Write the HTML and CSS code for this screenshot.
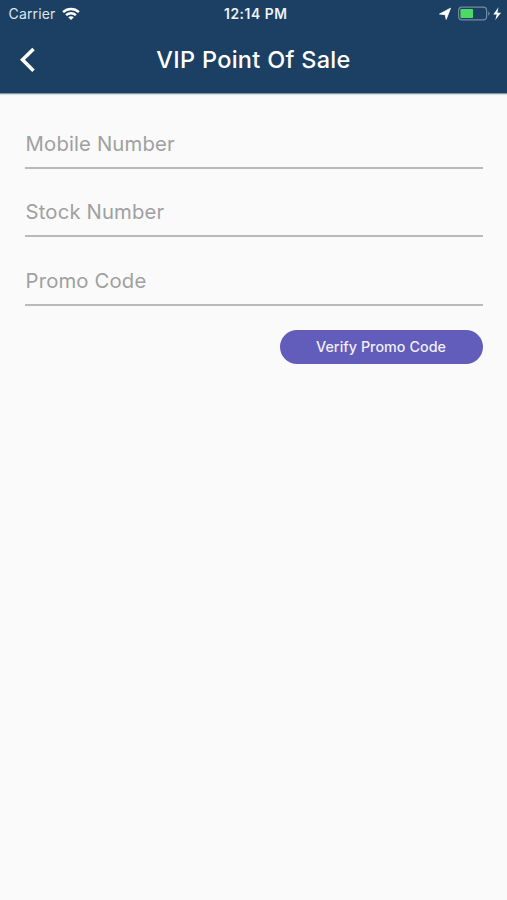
FILE: index.html
```html
<!DOCTYPE html>
<html lang="en">
<head>
<meta charset="utf-8">
<title>VIP Point Of Sale</title>
<link rel="stylesheet" href="styles.css">
</head>
<body>
<header class="header">
  <div class="status">
    <div class="status-left">
      <span class="carrier">Carrier</span>
      <svg class="wifi" width="18" height="14" viewBox="0 0 18 14" fill="none" stroke="#fff" stroke-width="2.4">
        <path d="M1.1 5.1C5.6.9 12.4.9 16.9 5.1"/>
        <path d="M4.1 8.2C6.9 5.6 11.1 5.6 13.9 8.2"/>
        <path d="M9 12.9 6.2 10.2C7.8 8.8 10.2 8.8 11.8 10.2Z" fill="#fff" stroke="none"/>
      </svg>
    </div>
    <span class="time">12:14 PM</span>
    <div class="status-right">
      <svg width="64" height="16" viewBox="0 0 64 16">
        <path d="M11.5 2.2 7.2 13.4 6.2 8.7 .5 8Z" fill="#fff" stroke="#fff" stroke-width=".8" stroke-linejoin="round"/>
        <rect x="19.6" y="1.1" width="28" height="12.8" rx="3.4" fill="none" stroke="#728ba4" stroke-width="1.2"/>
        <rect x="21.4" y="3.1" width="12.7" height="8.8" rx="1" fill="#4cd964"/>
        <path d="M49.2 5.4C51 6 51 9 49.2 9.6Z" fill="#728ba4"/>
        <path d="M59.5 1.3 54.3 8.4H57.7L56.3 14 62 6.7H58.4Z" fill="#fff"/>
      </svg>
    </div>
  </div>
  <div class="navbar">
    <button class="back" aria-label="Back">
      <svg width="18" height="26" viewBox="0 0 18 26" fill="none" stroke="#fff" stroke-width="3.5"><path d="M14.5 1.9 3.5 12.8 14.5 23.7"/></svg>
    </button>
    <h1 class="title">VIP Point Of Sale</h1>
  </div>
</header>
<main class="form">
  <label class="field"><span>Mobile Number</span></label>
  <label class="field"><span>Stock Number</span></label>
  <label class="field"><span>Promo Code</span></label>
  <button class="verify">Verify Promo Code</button>
</main>
</body>
</html>
```
FILE: styles.css
```css
* { box-sizing: border-box; }
body {
  margin: 0;
  min-height: 900px;
  background: #fafafa;
  font-family: Inter, "Liberation Sans", sans-serif;
}
button { border: 0; padding: 0; background: none; font: inherit; color: inherit; }
svg { display: block; }
.header {
  height: 94px;
  background: #1c4063;
  color: #fff;
  border-bottom: 1px solid #7f94a8;
  box-shadow: 0 1px 1px rgba(0, 0, 0, .1);
}
.status {
  display: grid;
  grid-template-columns: 1fr auto 1fr;
  align-items: center;
  height: 27px;
  padding: 0 4px 0 8.5px;
}
.status-left { display: flex; align-items: center; gap: 7px; }
.status-right { display: flex; justify-content: flex-end; }
.carrier { font-size: 14px; letter-spacing: .15px; color: #dfe6ec; }
.time { font-size: 13.8px; font-weight: 600; letter-spacing: .55px; color: #eef2f6; }
.navbar {
  display: grid;
  grid-template-columns: 60px 1fr 60px;
  align-items: center;
  height: 66px;
}
.back { padding-left: 19px; }
.title {
  margin: 0 0 2px;
  text-align: center;
  font-size: 23.5px;
  font-weight: 500;
  letter-spacing: .3px;
  white-space: nowrap;
}
.form { display: flex; flex-direction: column; padding: 25px 24.5px 0 25px; }
.field {
  display: flex;
  align-items: center;
  height: 50px;
  margin-bottom: 18.4px;
  padding: 1px 0 0 .6px;
  border-bottom: 2px solid #bababa;
  font-size: 20.3px;
  letter-spacing: .15px;
  color: #a0a0a0;
}
.verify {
  align-self: flex-end;
  width: 203px;
  height: 34px;
  margin-top: 5.5px;
  border-radius: 17px;
  background: #625cba;
  color: #f0effa;
  font-size: 14.3px;
  font-weight: 500;
  letter-spacing: .05px;
}
```
